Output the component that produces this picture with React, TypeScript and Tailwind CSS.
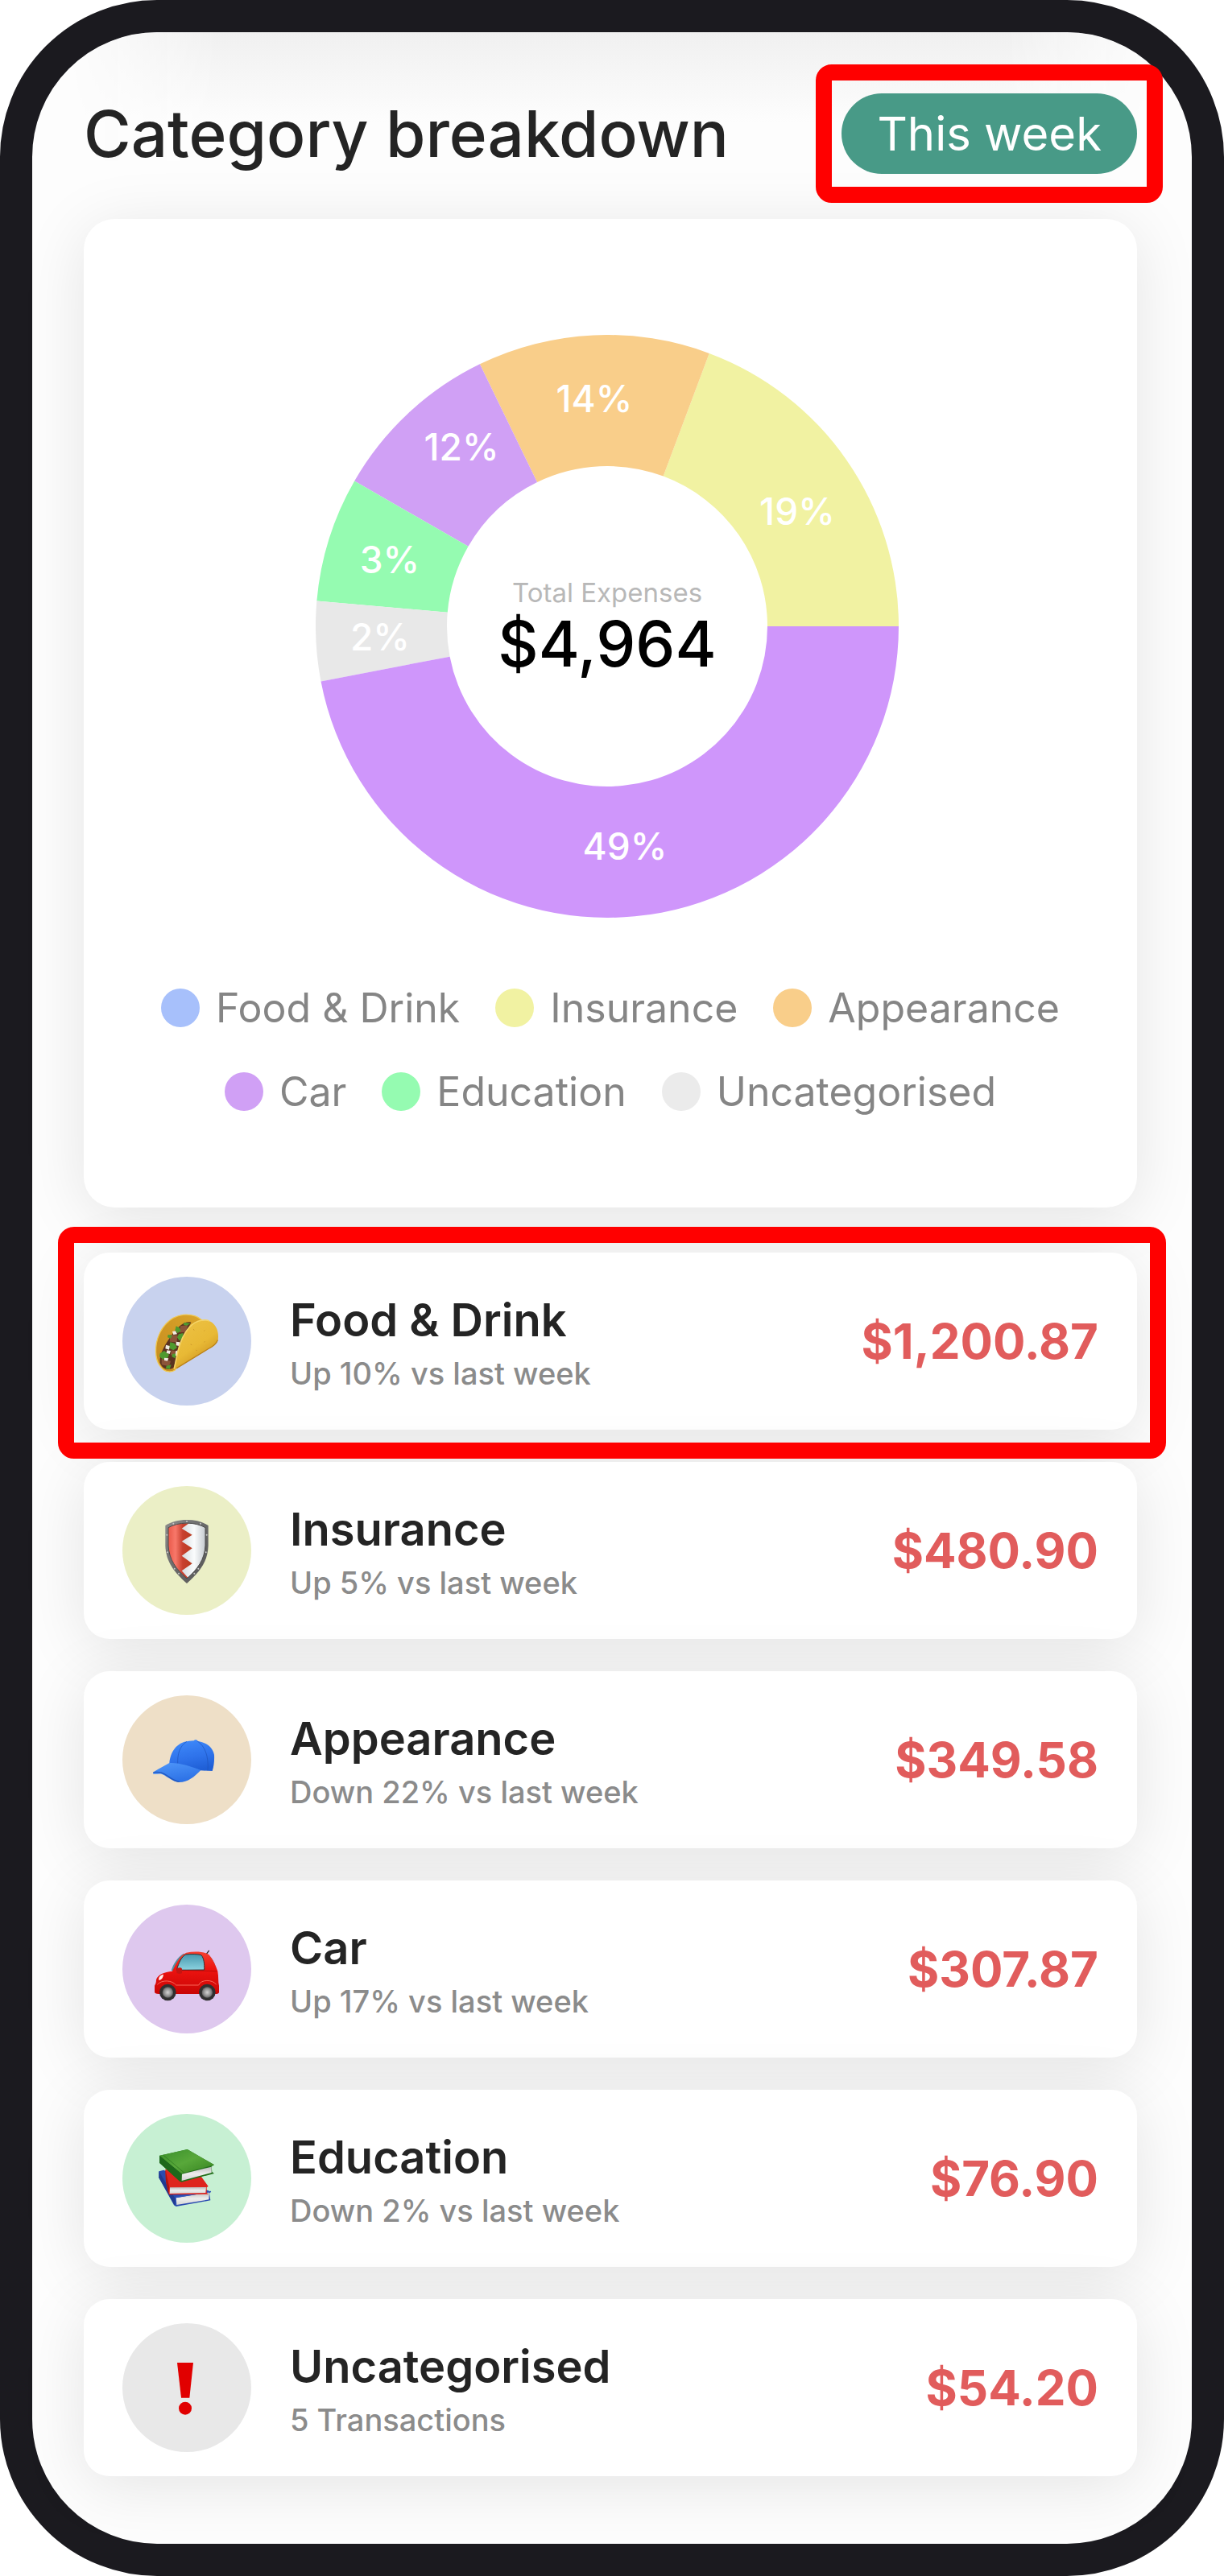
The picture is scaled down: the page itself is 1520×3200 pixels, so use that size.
import type { ReactNode } from "react";

type Slice = {
  label: string;
  from: number;
  to: number;
  color: string;
  x: number;
  y: number;
};

type Category = {
  name: string;
  note: string;
  amount: string;
  badge: string;
  dot: string;
  icon: ReactNode;
  highlighted?: boolean;
};

const OUTER = 362;
const INNER = 199;

// Angles run counter-clockwise from the positive x axis.
const slices: Slice[] = [
  { label: "19%", from: 0, to: 69.5, color: "#f1f2a2", x: 236, y: -143 },
  { label: "14%", from: 69.5, to: 115.9, color: "#f9ce8a", x: -16, y: -283 },
  { label: "12%", from: 115.9, to: 150.1, color: "#d0a0f5", x: -181, y: -223 },
  { label: "3%", from: 150.1, to: 175, color: "#95fbb1", x: -270, y: -83 },
  { label: "2%", from: 175, to: 190.9, color: "#e8e8e8", x: -282, y: 13 },
  { label: "49%", from: 190.9, to: 360, color: "#cf96fb", x: 22, y: 273 },
];

function point(radius: number, angle: number) {
  const rad = (angle * Math.PI) / 180;
  return `${radius * Math.cos(rad)} ${-radius * Math.sin(rad)}`;
}

function slicePath(from: number, to: number) {
  return [
    `M ${point(OUTER, from)}`,
    `A ${OUTER} ${OUTER} 0 0 0 ${point(OUTER, to)}`,
    `L ${point(INNER, to)}`,
    `A ${INNER} ${INNER} 0 0 1 ${point(INNER, from)}`,
    "Z",
  ].join(" ");
}

function TacoIcon() {
  return (
    <svg viewBox="36 48 480 480" className="size-full" aria-hidden="true">
      <defs>
        <linearGradient id="taco-front" x1="0" y1="0" x2="0.6" y2="1">
          <stop offset="0" stopColor="#edc347" />
          <stop offset="0.6" stopColor="#e8b935" />
          <stop offset="1" stopColor="#c98e1c" />
        </linearGradient>
        <linearGradient id="taco-back" x1="1" y1="0" x2="0" y2="1">
          <stop offset="0" stopColor="#dba52a" />
          <stop offset="1" stopColor="#c58b1f" />
        </linearGradient>
      </defs>
      <path d="M332 210C315 193 290 188 262 190C210 197 175 240 163 295C156 340 165 375 190 395C202 404 220 404 232 396Z" fill="url(#taco-back)" stroke="#f0c850" strokeWidth="4" />
      <path d="M292 218C268 212 245 232 222 262C195 300 172 338 176 368C184 392 206 398 226 388L262 280Z" fill="#5b3320" />
      <path d="M252 232L280 228L272 254L248 256Z M214 264L242 266L238 292L212 290Z M182 354L216 362L210 382L182 376Z M218 322L240 326L236 344L216 340Z" fill="#8b5438" />
      <path d="M236 232L248 238L254 250L242 258L232 248Z M266 218L290 222L276 230L264 228Z M206 264L222 266L216 278L204 274Z M246 262L262 258L262 278L248 286L240 274Z M214 292L230 296L240 312L226 322L210 314Z M176 334L192 324L210 338L204 352L188 356L174 346Z M222 336L236 334L232 352L220 346Z M200 380L218 376L212 392L198 390Z" fill="#4f9a2f" />
      <path d="M198 302L212 306L210 320L196 316Z M236 290L250 292L248 306L236 304Z M202 322L216 324L212 336L200 332Z M192 350L208 352L204 362L192 360Z M222 252L234 250L240 262L226 264Z M234 326L242 322L240 344L234 342Z" fill="#f1ece2" />
      <path d="M232 394C240 340 246 290 276 248C300 216 340 202 366 216C388 230 396 256 392 284C386 302 374 308 358 316Z" fill="url(#taco-front)" />
      <path d="M229 392C240 340 246 290 276 248C300 214 336 203 360 213" fill="none" stroke="#f6d567" strokeWidth="5" />
      <path d="M238 389L354 318C374 308 386 300 391 284" fill="none" stroke="#bb8118" strokeWidth="4" />
      <path d="M300 244l4 3M340 250l3-2M290 300l5 2M340 292l4-3M310 322l4 1" stroke="#cf982a" strokeWidth="3" />
    </svg>
  );
}

function ShieldIcon() {
  return (
    <svg viewBox="36 48 480 480" className="size-full" aria-hidden="true">
      <defs>
        <linearGradient id="shield-rim" x1="0" y1="0" x2="1" y2="1">
          <stop offset="0" stopColor="#8d8d8d" />
          <stop offset="0.5" stopColor="#696969" />
          <stop offset="1" stopColor="#565656" />
        </linearGradient>
        <linearGradient id="shield-red" x1="0" y1="0" x2="1" y2="0">
          <stop offset="0" stopColor="#e9594a" />
          <stop offset="0.3" stopColor="#f8786a" />
          <stop offset="0.6" stopColor="#c8402f" />
          <stop offset="1" stopColor="#b93c20" />
        </linearGradient>
        <linearGradient id="shield-white" x1="0" y1="0" x2="1" y2="0">
          <stop offset="0" stopColor="#b6b6b6" />
          <stop offset="0.45" stopColor="#dfe3e6" />
          <stop offset="0.7" stopColor="#fafcfd" />
          <stop offset="1" stopColor="#c6cbd0" />
        </linearGradient>
      </defs>
      <path d="M276 174C308 174 333 181 356 195V270C354 332 322 370 276 411C230 370 198 332 196 270V195C219 181 244 174 276 174Z" fill="url(#shield-rim)" />
      <path d="M276 186C304 187 326 192 345 203V270C342 322 317 357 276 393C235 357 210 322 207 270V203C226 192 248 187 276 186Z" fill="url(#shield-white)" />
      <path d="M284 187L257 206L296 230L257 254L296 280L257 308L296 337L257 364L280 389L276 393C235 357 210 322 207 270V203C226 192 248 186 284 187Z" fill="url(#shield-red)" />
      <path d="M276 186C304 187 326 192 345 203V270C342 322 317 357 276 393C235 357 210 322 207 270V203C226 192 248 187 276 186Z" fill="none" stroke="#4b4b4b" strokeWidth="3" />
      <g fill="#c9c9c9">
        <circle cx="226" cy="188" r="3" />
        <circle cx="276" cy="180" r="3" />
        <circle cx="327" cy="188" r="3" />
        <circle cx="350" cy="230" r="3" />
        <circle cx="202" cy="230" r="3" />
        <circle cx="204" cy="295" r="3" />
        <circle cx="347" cy="295" r="3" />
        <circle cx="230" cy="356" r="3" />
        <circle cx="319" cy="356" r="3" />
        <circle cx="246" cy="374" r="3" />
        <circle cx="304" cy="374" r="3" />
      </g>
    </svg>
  );
}

function CapIcon() {
  return (
    <svg viewBox="36 48 480 480" className="size-full" aria-hidden="true">
      <defs>
        <linearGradient id="cap-crown" x1="0.2" y1="0" x2="0.5" y2="1">
          <stop offset="0" stopColor="#3f8bfb" />
          <stop offset="0.6" stopColor="#2e72ea" />
          <stop offset="1" stopColor="#1f5fd6" />
        </linearGradient>
        <linearGradient id="cap-brim" x1="0" y1="0" x2="0.4" y2="1">
          <stop offset="0" stopColor="#4f97fa" />
          <stop offset="1" stopColor="#2d72e6" />
        </linearGradient>
      </defs>
      <path d="M303 217C304 213 314 213 316 218C348 224 372 240 378 270C379 292 377 312 371 330L326 328L211 301C214 262 236 222 284 218Z" fill="url(#cap-crown)" />
      <path d="M276 220C248 238 241 268 242 302M314 218C344 236 358 276 354 328" fill="none" stroke="#1d52b8" strokeWidth="2" />
      <path d="M211 300C246 298 292 312 328 327C304 352 280 372 248 372C224 371 206 352 184 342C172 338 162 343 151 341C148 334 158 330 168 324Z" fill="url(#cap-brim)" />
      <path d="M151 335C165 333 180 333 192 341C210 351 226 368 248 370" fill="none" stroke="#2258bf" strokeWidth="4" />
    </svg>
  );
}

function CarIcon() {
  return (
    <svg viewBox="36 48 480 480" className="size-full" aria-hidden="true">
      <defs>
        <linearGradient id="car-body" x1="0" y1="0" x2="0" y2="1">
          <stop offset="0" stopColor="#f4402f" />
          <stop offset="0.4" stopColor="#ee1410" />
          <stop offset="1" stopColor="#c90505" />
        </linearGradient>
        <linearGradient id="car-glass" x1="0" y1="0" x2="0" y2="1">
          <stop offset="0" stopColor="#4698ae" />
          <stop offset="1" stopColor="#8dd3e0" />
        </linearGradient>
        <radialGradient id="car-hub">
          <stop offset="0" stopColor="#d4d4d4" />
          <stop offset="0.7" stopColor="#8d8d8d" />
          <stop offset="1" stopColor="#5f5f5f" />
        </radialGradient>
      </defs>
      <path d="M349 232L358 220" stroke="#2b2b2b" strokeWidth="4" strokeLinecap="round" />
      <path d="M264 230C240 246 226 268 218 294L240 296L276 240Z M358 236C374 252 383 270 386 294L372 290Z" fill="#4f91a2" />
      <path d="M222 296C238 262 252 236 274 227C302 222 338 222 358 234C374 252 384 276 391 296C395 318 392 334 396 350V376C392 382 386 381 376 381H172C160 381 155 378 156 370V350C160 344 162 338 162 328C168 308 190 300 222 296Z" fill="url(#car-body)" />
      <path d="M238 292C246 264 256 242 272 234C292 232 316 232 330 236C340 248 342 270 341 291Z" fill="url(#car-glass)" stroke="#333" strokeWidth="3" />
      <path d="M238 290C238 282 258 280 258 289V303C252 307 243 306 238 302Z" fill="#c41511" />
      <path d="M172 330C169 320 176 310 189 308C188 320 182 328 172 330Z" fill="#fff0ec" />
      <path d="M166 346C184 326 222 330 236 348H320C328 326 372 326 386 346" fill="none" stroke="#fa6659" strokeWidth="3" />
      <path d="M258 292L388 296" stroke="#a50707" strokeWidth="2" />
      <g>
        <circle cx="205" cy="375" r="31" fill="#303030" />
        <circle cx="205" cy="375" r="20" fill="url(#car-hub)" />
        <circle cx="352" cy="375" r="31" fill="#303030" />
        <circle cx="352" cy="375" r="20" fill="url(#car-hub)" />
      </g>
    </svg>
  );
}

function BooksIcon() {
  return (
    <svg viewBox="36 48 480 480" className="size-full" aria-hidden="true">
      <defs>
        <linearGradient id="book-green" x1="0" y1="0" x2="1" y2="1">
          <stop offset="0" stopColor="#3a8f2b" />
          <stop offset="0.5" stopColor="#58a83a" />
          <stop offset="1" stopColor="#35821f" />
        </linearGradient>
        <linearGradient id="book-pages" x1="0" y1="0" x2="0" y2="1">
          <stop offset="0" stopColor="#bcbcbc" />
          <stop offset="0.5" stopColor="#ededed" />
          <stop offset="1" stopColor="#d5d5d5" />
        </linearGradient>
      </defs>
      <path d="M172 262L190 257L300 310L366 338L360 344L364 370L236 393L228 388L172 286Z" fill="#2a4bb0" />
      <path d="M172 262L232 362L232 391L172 286Z" fill="#203b91" />
      <path d="M236 361L360 340L358 367L238 387Z" fill="url(#book-pages)" />
      <path d="M234 359L366 337" stroke="#3457bd" strokeWidth="4" />
      <path d="M196 254L330 282L356 318L350 322V342L356 347L210 349L198 300Z" fill="#de241d" />
      <path d="M196 254L210 318L208 349L198 300Z" fill="#a91612" />
      <path d="M213 322L348 321L346 342L212 345Z" fill="url(#book-pages)" />
      <path d="M174 204L278 180L378 238L368 244L370 264L378 270L256 302L248 298L174 230Z" fill="#236f1b" />
      <path d="M174 203L278 180L378 238L255 270Z" fill="url(#book-green)" />
      <path d="M174 203L255 270L252 301L174 230Z" fill="#1e681b" />
      <path d="M258 272L368 245V267L257 297Z" fill="url(#book-pages)" />
      <path d="M188 201L266 267" stroke="#286f1d" strokeWidth="2" />
    </svg>
  );
}

function AlertIcon() {
  return (
    <svg viewBox="36 48 480 480" className="size-full" aria-hidden="true">
      <path d="M240 195H300L286 326H255Z" fill="#e10000" />
      <circle cx="270" cy="365" r="24" fill="#e10000" />
    </svg>
  );
}

const categories: Category[] = [
  { name: "Food & Drink", note: "Up 10% vs last week", amount: "$1,200.87", badge: "bg-[#c8d2ee]", dot: "bg-[#a7c0fb]", icon: <TacoIcon />, highlighted: true },
  { name: "Insurance", note: "Up 5% vs last week", amount: "$480.90", badge: "bg-[#ebefc6]", dot: "bg-[#f1f2a2]", icon: <ShieldIcon /> },
  { name: "Appearance", note: "Down 22% vs last week", amount: "$349.58", badge: "bg-[#eedfc7]", dot: "bg-[#f9ce8a]", icon: <CapIcon /> },
  { name: "Car", note: "Up 17% vs last week", amount: "$307.87", badge: "bg-[#dec8ee]", dot: "bg-[#d0a0f5]", icon: <CarIcon /> },
  { name: "Education", note: "Down 2% vs last week", amount: "$76.90", badge: "bg-[#c7f0d3]", dot: "bg-[#95fbb1]", icon: <BooksIcon /> },
  { name: "Uncategorised", note: "5 Transactions", amount: "$54.20", badge: "bg-[#e8e8e8]", dot: "bg-[#ebebeb]", icon: <AlertIcon /> },
];

function ExpenseDonut() {
  return (
    <svg viewBox="-362 -362 733 724" className="w-[733px] max-w-full" role="img" aria-label="Total Expenses $4,964">
      {slices.map((slice) => (
        <path key={slice.label} d={slicePath(slice.from, slice.to)} fill={slice.color} />
      ))}
      <g textAnchor="middle" className="fill-white text-[46px] font-medium">
        {slices.map((slice) => (
          <text key={slice.label} x={slice.x} y={slice.y + 17}>
            {slice.label}
          </text>
        ))}
      </g>
      <text x="0" y="-30" textAnchor="middle" className="fill-[#b8b8b8] text-[33px]">
        Total Expenses
      </text>
      <text x="0" y="50" textAnchor="middle" className="fill-black text-[78px] font-medium">
        $4,964
      </text>
    </svg>
  );
}

function CategoryRow({ category }: { category: Category }) {
  return (
    <li className="relative flex items-center gap-12 rounded-[32px] bg-white px-12 py-[30px] shadow-[0_12px_80px_rgba(0,0,0,0.1)]">
      <div className={`size-40 shrink-0 rounded-full ${category.badge}`}>{category.icon}</div>
      <div className="min-w-0 flex-1 pt-2">
        <h2 className="text-[56px] leading-[64px] font-semibold text-[#242424]">{category.name}</h2>
        <p className="mt-2 text-[38px] leading-[52px] font-medium text-[#8b8b8b]">{category.note}</p>
      </div>
      <p className="text-[60px] leading-[72px] font-bold text-[#e15c5c]">{category.amount}</p>
      {category.highlighted && (
        <span className="pointer-events-none absolute -top-8 -right-9 -bottom-9 -left-8 z-10 rounded-[20px] border-[20px] border-[#ff0000]" />
      )}
    </li>
  );
}

export default function App() {
  return (
    <main className="relative rounded-[195px] border-[40px] border-[#1b1a1f] bg-[#fdfdfd] pt-[76px] pr-[68px] pb-[84px] pl-16 font-['Inter',sans-serif]">
      <div className="pointer-events-none absolute inset-x-0 top-0 h-40 rounded-t-[155px] bg-linear-to-b from-[#f0f0f0] to-[#fdfdfd] to-70% [mask-image:linear-gradient(to_right,transparent_3%,black_16%,black_84%,transparent_97%)]" />

      <header className="relative flex items-center justify-between">
        <h1 className="text-[80px] leading-[100px] font-medium whitespace-nowrap text-[#242424]">Category breakdown</h1>
        <div className="relative">
          <button type="button" className="h-[100px] rounded-full bg-[#489a87] px-11 text-[58px] leading-[100px] whitespace-nowrap text-white">
            This week
          </button>
          <span className="pointer-events-none absolute -inset-x-8 -inset-y-9 rounded-[20px] border-[20px] border-[#ff0000]" />
        </div>
      </header>

      <section className="mt-14 flex flex-col items-center rounded-[38px] bg-white px-12 pt-36 pb-[116px] shadow-[0_12px_80px_rgba(0,0,0,0.1)]">
        <ExpenseDonut />
        <ul className="mt-[84px] flex flex-wrap justify-center gap-x-11 gap-y-12">
          {categories.map((category) => (
            <li key={category.name} className="flex items-center gap-5 text-[50px] leading-[56px] text-[#858585]">
              <span className={`size-12 rounded-full ${category.dot}`} />
              {category.name}
            </li>
          ))}
        </ul>
      </section>

      <ul className="mt-14 flex flex-col gap-10">
        {categories.map((category) => (
          <CategoryRow key={category.name} category={category} />
        ))}
      </ul>
    </main>
  );
}
